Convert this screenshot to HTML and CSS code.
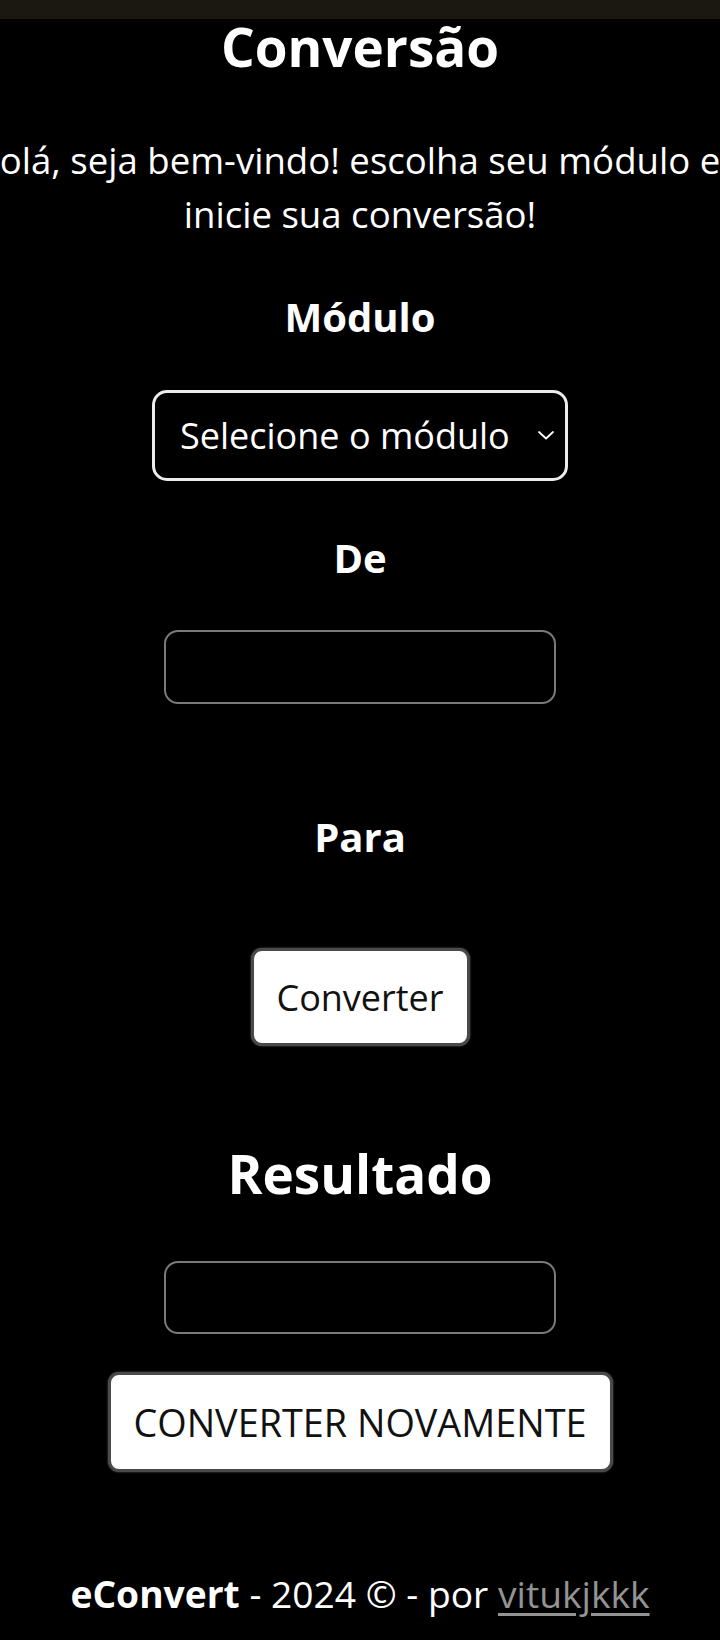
FILE: index.html
```html
<!DOCTYPE html>
<html lang="pt-BR">
<head>
<meta charset="utf-8">
<title>eConvert</title>
<link rel="stylesheet" href="styles.css">
</head>
<body>
<div class="topbar"></div>
<main class="page">
  <h1 class="title">Conversão</h1>
  <p class="intro">olá, seja bem-vindo! escolha seu módulo e<br>inicie sua conversão!</p>
  <h2 class="label label-modulo">Módulo</h2>
  <div class="select-wrap">
    <select class="select">
      <option>Selecione o módulo</option>
    </select>
    <svg class="chevron" viewBox="0 0 18 10" width="18" height="10" aria-hidden="true"><path d="M2 2 L9 8.5 L16 2" fill="none" stroke="#fff" stroke-width="1.8" stroke-linecap="round" stroke-linejoin="round"/></svg>
  </div>
  <h2 class="label label-de">De</h2>
  <input class="field field-de" type="text">
  <h2 class="label label-para">Para</h2>
  <button class="btn btn-convert">Converter</button>
  <h1 class="result-title">Resultado</h1>
  <input class="field field-result" type="text">
  <button class="btn btn-again">CONVERTER NOVAMENTE</button>
  <footer class="footer"><strong>eConvert</strong> - 2024 © - por <a href="#">vitukjkkk</a></footer>
</main>
</body>
</html>
```

FILE: styles.css
```css
html, body {
  margin: 0;
  padding: 0;
  background: #000;
}
body {
  width: 720px;
  min-height: 1640px;
  color: #fff;
  font-family: "Open Sans", "Noto Sans", sans-serif;
  font-size: 36px;
  overflow: hidden;
}
.topbar {
  height: 19px;
  background: #1b1812;
}
.page {
  display: flex;
  flex-direction: column;
  align-items: center;
  text-align: center;
}
.title {
  margin: 0;
  font-size: 53px;
  line-height: 56px;
  font-weight: 700;
}
.intro {
  margin: 58px 0 0;
  width: 760px;
  flex-shrink: 0;
  line-height: 54px;
  font-size: 36.6px;
  white-space: nowrap;
}
.label {
  margin: 0;
  font-size: 40px;
  line-height: 48px;
  font-weight: 700;
}
.label-modulo { margin-top: 52px; }
.label-de { margin-top: 53px; }
.label-para { margin-top: 109px; }
.select-wrap {
  position: relative;
  margin-top: 49px;
  width: 416px;
  height: 91px;
}
.select {
  appearance: none;
  -webkit-appearance: none;
  box-sizing: border-box;
  width: 100%;
  height: 100%;
  background: #000;
  color: #fff;
  border: 3px solid #ececec;
  border-radius: 15px;
  font-family: inherit;
  font-size: 36px;
  padding: 0 0 0 25px;
  text-align: left;
}
.chevron {
  position: absolute;
  right: 13px;
  top: 40px;
}
.field {
  box-sizing: border-box;
  width: 392px;
  height: 74px;
  background: #000;
  border: 2px solid #7a7a7a;
  border-radius: 14px;
  margin-top: 48px;
  color: #fff;
  font-family: inherit;
  font-size: 36px;
}
.field-result { margin-top: 55px; height: 73px; }
.btn {
  box-sizing: border-box;
  background: #fff;
  color: #111;
  border: 3px solid #4a4a4a;
  border-radius: 11px;
  font-family: inherit;
  font-size: 36px;
  padding: 0;
  box-shadow: 0 0 2px #666;
}
.btn-convert {
  margin-top: 87px;
  width: 219px;
  height: 98px;
}
.result-title {
  margin: 96px 0 0;
  font-size: 53px;
  line-height: 64px;
  font-weight: 700;
}
.btn-again {
  margin-top: 38px;
  width: 505px;
  height: 100px;
  font-size: 37.8px;
}
.footer {
  margin-top: 98px;
  line-height: 48px;
  font-size: 37.2px;
}
.footer strong { font-weight: 700; }
.footer a {
  color: #939393;
  text-decoration: underline;
  text-underline-offset: 5px;
}
```
